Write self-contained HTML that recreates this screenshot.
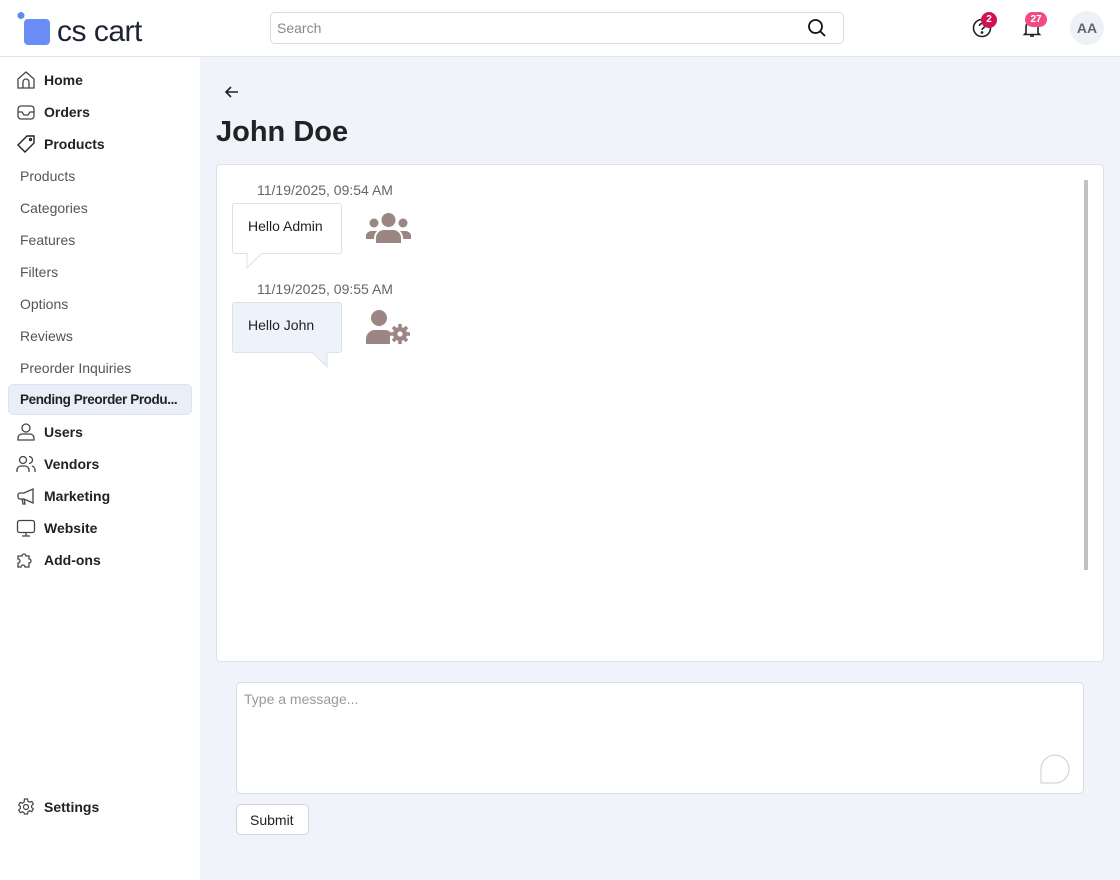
<!DOCTYPE html>
<html><head><meta charset="utf-8"><style>
*{box-sizing:border-box;margin:0;padding:0}
body{width:1120px;height:880px;overflow:hidden;font-family:"Liberation Sans","DejaVu Sans",sans-serif;background:#f0f3fa;color:#222;position:relative}
.hdr{position:absolute;left:0;top:0;width:1120px;height:57px;background:#fff;border-bottom:1px solid #e1e5ee}
.side{position:absolute;left:0;top:57px;width:200px;height:823px;background:#fff}
.logo{position:absolute;left:17px;top:12px}
.search{position:absolute;left:270px;top:12px;width:574px;height:32px;border:1px solid #d8dce4;border-radius:5px;font-size:14px;color:#888;padding:7px 6px}
.nav{position:absolute;left:0;font-size:14px;color:#222;white-space:nowrap}
.nav.b{font-weight:bold;left:44px}
.sub{left:20px;color:#555}
.ico{position:absolute;left:16px}
.act{position:absolute;left:8px;top:384px;width:184px;height:31px;background:#e9eef8;border:1px solid #dde3ef;border-radius:5px;font-size:13.5px;font-weight:bold;letter-spacing:-.4px;padding:7px 11px;color:#222;white-space:nowrap}
.card{position:absolute;left:216px;top:164px;width:888px;height:498px;background:#fff;border:1px solid #dde1e8;border-radius:4px}
.ts{position:absolute;font-size:14px;color:#666}
.bub{position:absolute;left:232px;width:110px;height:51px;border:1px solid #dde1e8;border-radius:3px;font-size:14px;padding:14px 15px;color:#222}
.ta{position:absolute;left:236px;top:682px;width:848px;height:112px;background:#fff;border:1px solid #d8dce4;border-radius:5px;font-size:14px;color:#999;padding:8px 7px}
.btn{position:absolute;left:236px;top:804px;width:73px;height:31px;background:#fff;border:1px solid #d0d4dc;border-radius:5px;font-size:14px;padding:7px 13px}
</style></head><body>
<div class="hdr">
 <svg class="logo" width="140" height="34" viewBox="0 0 140 34"><circle cx="4" cy="3.5" r="3.5" fill="#5b8df6"/><rect x="7" y="7" width="26" height="26" rx="4" fill="#6a8cf7"/><text x="40" y="29" font-family="Liberation Sans,sans-serif" font-size="30" fill="#1d2333" letter-spacing="-.5">cs cart</text></svg>
 <div class="search">Search</div>
 <svg style="position:absolute;left:807px;top:18px" width="20" height="20" viewBox="0 0 20 20" fill="none" stroke="#111" stroke-width="1.8"><circle cx="8.5" cy="8.5" r="6.5"/><path d="M13.5 13.5L18 18"/></svg>
 <svg style="position:absolute;left:972px;top:18px" width="20" height="20" viewBox="0 0 20 20" fill="none" stroke="#222" stroke-width="1.6"><circle cx="10" cy="10" r="8.5"/><path d="M7.5 8a2.5 2.5 0 1 1 3.5 2.3c-.7.4-1 .9-1 1.7"/><circle cx="10" cy="14.5" r=".6" fill="#222"/></svg>
 <div style="position:absolute;left:981px;top:12px;width:16px;height:16px;border-radius:8px;background:#d0124e;color:#fff;font-size:10px;font-weight:bold;text-align:center;line-height:16px">2</div>
 <svg style="position:absolute;left:1022px;top:18px" width="20" height="20" viewBox="0 0 20 20" fill="none" stroke="#222" stroke-width="1.6"><path d="M4 15V9a6 6 0 0 1 12 0v6l1.5 1.5h-15z"/><path d="M8 18h4"/></svg>
 <div style="position:absolute;left:1025px;top:12px;width:22px;height:15px;border-radius:8px;background:#ef4c82;color:#fff;font-size:10px;font-weight:bold;text-align:center;line-height:15px">27</div>
 <div style="position:absolute;left:1070px;top:11px;width:34px;height:34px;border-radius:17px;background:#eef1f7;color:#666;font-size:14px;font-weight:bold;text-align:center;line-height:34px">AA</div>
</div>
<div class="side">
 <svg class="ico" style="top:13px" width="20" height="20" viewBox="0 0 20 20" fill="none" stroke="#444" stroke-width="1.3"><path d="M2 9L10 2l8 7v9H2z"/><path d="M7 18v-6a3 3 0 0 1 6 0v6"/></svg>
 <div class="nav b" style="top:15px">Home</div>
 <svg class="ico" style="top:45px" width="20" height="20" viewBox="0 0 20 20" fill="none" stroke="#444" stroke-width="1.3"><rect x="2" y="4" width="16" height="13" rx="3"/><path d="M2 10h4l2 3h4l2-3h4"/></svg>
 <div class="nav b" style="top:47px">Orders</div>
 <svg class="ico" style="top:77px" width="20" height="20" viewBox="0 0 20 20" fill="none" stroke="#222" stroke-width="1.4"><path d="M11 2h7v7l-9 9-7-7z"/><circle cx="14.5" cy="5.5" r="1"/></svg>
 <div class="nav b" style="top:79px">Products</div>
 <div class="nav sub" style="top:111px">Products</div>
 <div class="nav sub" style="top:143px">Categories</div>
 <div class="nav sub" style="top:175px">Features</div>
 <div class="nav sub" style="top:207px">Filters</div>
 <div class="nav sub" style="top:239px">Options</div>
 <div class="nav sub" style="top:271px">Reviews</div>
 <div class="nav sub" style="top:303px">Preorder Inquiries</div>
</div>
<div class="act">Pending Preorder Produ...</div>
<div style="position:absolute;left:0;top:0">
 <svg class="ico" style="top:422px" width="20" height="20" viewBox="0 0 20 20" fill="none" stroke="#444" stroke-width="1.3"><circle cx="10" cy="6" r="4"/><path d="M2 18v-2a4 4 0 0 1 4-4h8a4 4 0 0 1 4 4v2z"/></svg>
 <div class="nav b" style="top:424px">Users</div>
 <svg class="ico" style="top:454px" width="20" height="20" viewBox="0 0 20 20" fill="none" stroke="#444" stroke-width="1.3"><circle cx="7" cy="6" r="3.5"/><path d="M1 18v-2a4 4 0 0 1 4-4h4a4 4 0 0 1 4 4v2"/><path d="M13 2.5a3.5 3.5 0 0 1 0 7M16 12a4 4 0 0 1 3 4v2"/></svg>
 <div class="nav b" style="top:456px">Vendors</div>
 <svg class="ico" style="top:486px" width="20" height="20" viewBox="0 0 20 20" fill="none" stroke="#444" stroke-width="1.3"><path d="M17 3v14L8 13H4a2 2 0 0 1-2-2V9a2 2 0 0 1 2-2h4z"/><path d="M6 13l1 5h2l-1-5"/></svg>
 <div class="nav b" style="top:488px">Marketing</div>
 <svg class="ico" style="top:518px" width="20" height="20" viewBox="0 0 20 20" fill="none" stroke="#444" stroke-width="1.3"><rect x="1.5" y="2.5" width="17" height="12" rx="2"/><path d="M10 15v3M6 18h8"/></svg>
 <div class="nav b" style="top:520px">Website</div>
 <svg class="ico" style="top:550px" width="20" height="20" viewBox="0 0 20 20" fill="none" stroke="#444" stroke-width="1.3"><path d="M3 6h3a2 2 0 1 1 4 0h3v3a2 2 0 1 1 0 4v4H9a2 2 0 1 0-4 0H2v-4a2 2 0 1 0 0-4V6z"/></svg>
 <div class="nav b" style="top:552px">Add-ons</div>
 <svg class="ico" style="top:797px" width="20" height="20" viewBox="0 0 20 20" fill="none" stroke="#444" stroke-width="1.2"><path d="M8.5 2h3l.5 2.3 1.6.9 2.2-.8 1.5 2.6-1.7 1.6v1.8l1.7 1.6-1.5 2.6-2.2-.8-1.6.9-.5 2.3h-3L8 15.7l-1.6-.9-2.2.8-1.5-2.6 1.7-1.6V9.6L2.7 8l1.5-2.6 2.2.8L8 5.3z"/><circle cx="10" cy="10" r="2.5"/></svg>
 <div class="nav b" style="top:799px">Settings</div>
</div>
<svg style="position:absolute;left:223px;top:83px" width="18" height="18" viewBox="0 0 18 18" fill="none" stroke="#222" stroke-width="1.6"><path d="M15 9H3M8 4L3 9l5 5"/></svg>
<div style="position:absolute;left:216px;top:116px;font-size:29px;font-weight:bold;color:#222">John Doe</div>
<div class="card"></div>
<div style="position:absolute;left:1084px;top:180px;width:4px;height:390px;background:#c1c1c1"></div>
<div class="ts" style="left:257px;top:182px">11/19/2025, 09:54 AM</div>
<div class="bub" style="top:203px;background:#fff">Hello Admin</div>
<svg style="position:absolute;left:246px;top:253px" width="18" height="16"><path d="M1 0V15L16 0" fill="#fff" stroke="#dde1e8"/><path d="M1.5 0H15" stroke="#fff" stroke-width="2"/></svg>
<svg style="position:absolute;left:366px;top:212px" width="45" height="32" viewBox="0 0 45 32" fill="#9b8684"><circle cx="22.5" cy="8" r="7"/><circle cx="8" cy="11" r="4.5"/><circle cx="37" cy="11" r="4.5"/><path d="M10 31v-5a8 8 0 0 1 8-8h9a8 8 0 0 1 8 8v5z"/><path d="M0 27a6 6 0 0 1 6-8h5a10 10 0 0 0-3 8z"/><path d="M45 27a6 6 0 0 0-6-8h-5a10 10 0 0 1 3 8z"/></svg>
<div class="ts" style="left:257px;top:281px">11/19/2025, 09:55 AM</div>
<div class="bub" style="top:302px;background:#eef2fa">Hello John</div>
<svg style="position:absolute;left:310px;top:352px" width="18" height="16"><path d="M17 0V15L2 0" fill="#eef2fa" stroke="#dde1e8"/><path d="M3 0H16.5" stroke="#eef2fa" stroke-width="2"/></svg>
<svg style="position:absolute;left:366px;top:309px" width="46" height="36" viewBox="0 0 46 36" fill="#9b8684"><circle cx="13" cy="9" r="8"/><path d="M0 35v-5a9 9 0 0 1 9-9h10a9 9 0 0 1 5 1.5V35z"/><g transform="translate(34,25)"><circle r="7"/><g stroke="#9b8684" stroke-width="3.5"><path d="M0-10V10M-10 0H10M-7-7L7 7M-7 7L7-7"/></g><circle r="2.6" fill="#fff"/></g></svg>
<div class="ta">Type a message...</div>
<svg style="position:absolute;left:1039px;top:753px" width="36" height="32"><path d="M2 30h16A14 14 0 1 0 2 16z" fill="#fff" stroke="#ccc"/></svg>
<div class="btn">Submit</div>
</body></html>
